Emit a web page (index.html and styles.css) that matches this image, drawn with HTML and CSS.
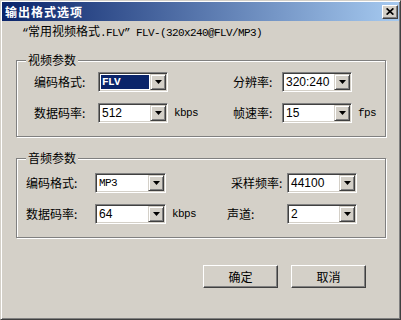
FILE: index.html
```html
<!DOCTYPE html>
<html lang="zh-CN">
<head>
<meta charset="utf-8">
<title>输出格式选项</title>
<link rel="stylesheet" href="styles.css">
</head>
<body>
<div class="window">
  <div class="titlebar">
    <span class="title">输出格式选项</span>
    <span class="close"><svg width="8" height="7" viewBox="0 0 8 7"><path d="M0.6 0.4 L7.4 6.6 M7.4 0.4 L0.6 6.6" stroke="#000" stroke-width="1.7" fill="none"/></svg></span>
  </div>

  <div class="subtitle"><span class="latin">“</span>常用视频格式<span class="latin">.FLV” FLV-(320x240@FLV/MP3)</span></div>

  <div class="group group-video">
    <span class="legend">视频参数</span>
    <span class="label">编码格式:</span>
    <div class="combo"><span class="val sel mono">FLV</span><span class="drop"><svg width="7" height="4" viewBox="0 0 7 4"><path d="M0 0H7L3.5 4Z" fill="#000"/></svg></span></div>
    <span class="unit"></span>
    <span class="label">分辨率:</span>
    <div class="combo"><span class="val">320:240</span><span class="drop"><svg width="7" height="4" viewBox="0 0 7 4"><path d="M0 0H7L3.5 4Z" fill="#000"/></svg></span></div>
    <span class="unit"></span>

    <span class="label">数据码率:</span>
    <div class="combo"><span class="val">512</span><span class="drop"><svg width="7" height="4" viewBox="0 0 7 4"><path d="M0 0H7L3.5 4Z" fill="#000"/></svg></span></div>
    <span class="unit">kbps</span>
    <span class="label">帧速率:</span>
    <div class="combo"><span class="val">15</span><span class="drop"><svg width="7" height="4" viewBox="0 0 7 4"><path d="M0 0H7L3.5 4Z" fill="#000"/></svg></span></div>
    <span class="unit">fps</span>
  </div>

  <div class="group group-audio">
    <span class="legend">音频参数</span>
    <span class="label">编码格式:</span>
    <div class="combo"><span class="val mono">MP3</span><span class="drop"><svg width="7" height="4" viewBox="0 0 7 4"><path d="M0 0H7L3.5 4Z" fill="#000"/></svg></span></div>
    <span class="unit"></span>
    <span class="label shift">采样频率:</span>
    <div class="combo"><span class="val">44100</span><span class="drop"><svg width="7" height="4" viewBox="0 0 7 4"><path d="M0 0H7L3.5 4Z" fill="#000"/></svg></span></div>
    <span class="unit"></span>

    <span class="label">数据码率:</span>
    <div class="combo"><span class="val">64</span><span class="drop"><svg width="7" height="4" viewBox="0 0 7 4"><path d="M0 0H7L3.5 4Z" fill="#000"/></svg></span></div>
    <span class="unit">kbps</span>
    <span class="label">声道:</span>
    <div class="combo"><span class="val">2</span><span class="drop"><svg width="7" height="4" viewBox="0 0 7 4"><path d="M0 0H7L3.5 4Z" fill="#000"/></svg></span></div>
    <span class="unit"></span>
  </div>

  <div class="actions">
    <button class="push" type="button">确定</button>
    <button class="push" type="button">取消</button>
  </div>
</div>
</body>
</html>
```
FILE: styles.css
```css
html, body {
  margin: 0;
  padding: 0;
}
body {
  width: 401px;
  height: 320px;
  overflow: hidden;
  background: #D4D0C8;
  font-family: "Noto Sans CJK SC", sans-serif;
  font-size: 12px;
  color: #000;
}
.window {
  box-sizing: border-box;
  width: 401px;
  height: 320px;
  border: 1px solid;
  border-color: #D4D0C8 #404040 #404040 #D4D0C8;
  box-shadow: inset 1px 1px #fff, inset -1px -1px #808080;
  padding: 1px;
  background: #D4D0C8;
  display: flex;
  flex-direction: column;
}
.titlebar {
  height: 19px;
  flex: none;
  display: flex;
  align-items: center;
  justify-content: space-between;
  padding: 0 1px 0 3px;
  background: linear-gradient(to right, #0A246A, #A6CAF0);
}
.title {
  color: #fff;
  font-weight: bold;
  font-size: 12px;
  letter-spacing: 1px;
  line-height: 19px;
}
.close {
  box-sizing: border-box;
  width: 16px;
  height: 14px;
  background: #D4D0C8;
  border: 1px solid;
  border-color: #fff #404040 #404040 #fff;
  box-shadow: inset -1px -1px #808080;
  display: flex;
  align-items: center;
  justify-content: center;
}
.subtitle {
  margin-top: 3px;
  padding-left: 20px;
  height: 14px;
  line-height: 14px;
  white-space: nowrap;
}
.latin, .unit, .mono {
  font-family: "Liberation Mono", monospace;
  font-size: 11px;
  letter-spacing: -0.6px;
}
.group {
  position: relative;
  box-sizing: border-box;
  margin: 22px 13px 0 14px;
  border: 1px solid #808080;
  box-shadow: inset 1px 1px #fff, 1px 1px #fff;
  display: grid;
  grid-template-rows: 20px 20px;
  row-gap: 11px;
  align-items: center;
}
.group-video {
  padding: 11px 0 13px 17px;
  grid-template-columns: 64px 70px 65px 49px 70px auto;
}
.group-audio {
  margin-top: 21px;
  padding: 14px 0 13px 9px;
  grid-template-columns: 69px 71px 61px 60px 70px auto;
}
.legend {
  position: absolute;
  top: -8px;
  left: 9px;
  padding: 0 2px;
  line-height: 14px;
  background: #D4D0C8;
}
.label {
  white-space: nowrap;
  line-height: 14px;
}
.shift {
  padding-left: 4px;
}
.unit {
  padding-left: 6px;
}
.combo {
  box-sizing: border-box;
  height: 20px;
  border: 1px solid;
  border-color: #808080 #fff #fff #808080;
  box-shadow: inset 1px 1px #404040, inset -1px -1px #D4D0C8;
  background: #fff;
  padding: 1px;
  display: flex;
}
.val {
  flex: 1;
  display: flex;
  align-items: center;
  padding-left: 2px;
  font-family: "Liberation Sans", sans-serif;
  font-size: 12px;
}
.val.mono {
  font-family: "Liberation Mono", monospace;
  font-size: 11px;
  letter-spacing: -0.6px;
}
.val.sel {
  margin: 1px 1px 1px 1px;
  padding-left: 1px;
  background: #0A246A;
  color: #fff;
  font-weight: bold;
}
.drop {
  box-sizing: border-box;
  width: 16px;
  flex: none;
  background: #D4D0C8;
  border: 1px solid;
  border-color: #D4D0C8 #404040 #404040 #D4D0C8;
  box-shadow: inset 1px 1px #fff, inset -1px -1px #808080;
  display: flex;
  align-items: center;
  justify-content: center;
}
.actions {
  margin-top: 27px;
  padding-right: 33px;
  display: flex;
  justify-content: flex-end;
  gap: 13px;
}
.push {
  box-sizing: border-box;
  width: 75px;
  height: 23px;
  margin: 0;
  padding: 0;
  border: 1px solid;
  border-color: #fff #404040 #404040 #fff;
  box-shadow: inset -1px -1px #808080;
  background: #D4D0C8;
  font-family: "Noto Sans CJK SC", sans-serif;
  font-size: 12px;
  color: #000;
  display: flex;
  align-items: center;
  justify-content: center;
}
```
